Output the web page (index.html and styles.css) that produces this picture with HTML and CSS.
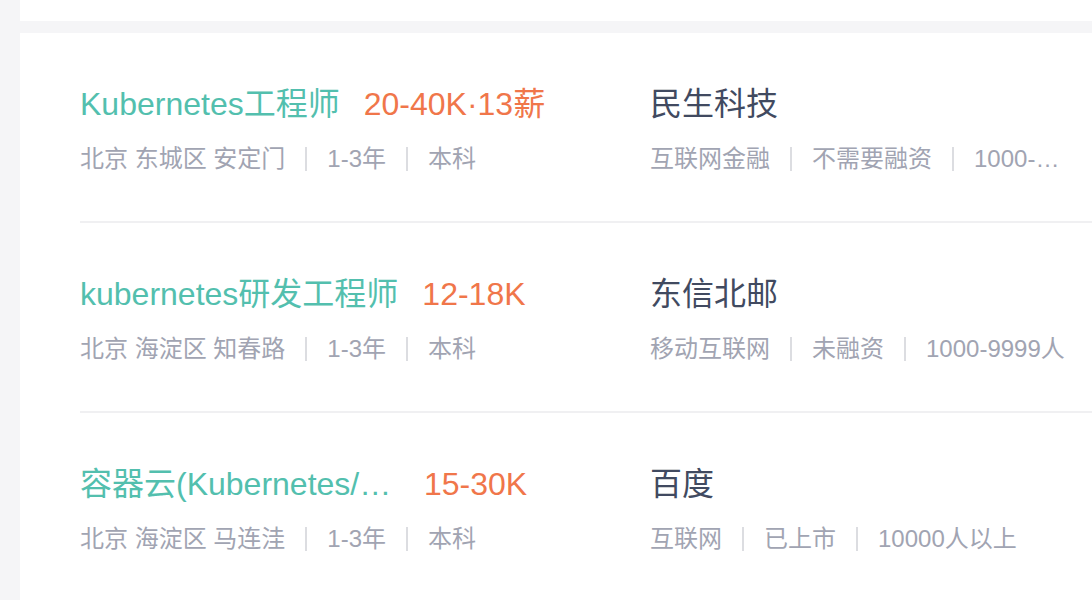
FILE: index.html
```html
<!DOCTYPE html>
<html lang="zh-CN">
<head>
<meta charset="utf-8">
<title>职位列表</title>
<link rel="stylesheet" href="styles.css">
</head>
<body>
<div class="page">
  <div class="prev-card"></div>
  <ul class="job-list">
    <li class="job">
      <div class="job-primary">
        <div class="job-head">
          <span class="job-title">Kubernetes工程师</span>
          <span class="salary">20-40K·13薪</span>
        </div>
        <div class="meta">
          <span class="meta-item">北京 东城区 安定门</span>
          <span class="sep"></span>
          <span class="meta-item">1-3年</span>
          <span class="sep"></span>
          <span class="meta-item">本科</span>
        </div>
      </div>
      <div class="job-company">
        <div class="company-name">民生科技</div>
        <div class="meta">
          <span class="meta-item">互联网金融</span>
          <span class="sep"></span>
          <span class="meta-item">不需要融资</span>
          <span class="sep"></span>
          <span class="meta-item meta-last">1000-9999人</span>
        </div>
      </div>
    </li>
    <li class="job">
      <div class="job-primary">
        <div class="job-head">
          <span class="job-title">kubernetes研发工程师</span>
          <span class="salary">12-18K</span>
        </div>
        <div class="meta">
          <span class="meta-item">北京 海淀区 知春路</span>
          <span class="sep"></span>
          <span class="meta-item">1-3年</span>
          <span class="sep"></span>
          <span class="meta-item">本科</span>
        </div>
      </div>
      <div class="job-company">
        <div class="company-name">东信北邮</div>
        <div class="meta">
          <span class="meta-item">移动互联网</span>
          <span class="sep"></span>
          <span class="meta-item">未融资</span>
          <span class="sep"></span>
          <span class="meta-item meta-last">1000-9999人</span>
        </div>
      </div>
    </li>
    <li class="job">
      <div class="job-primary">
        <div class="job-head">
          <span class="job-title">容器云(Kubernetes/Docker)研发工程师</span>
          <span class="salary">15-30K</span>
        </div>
        <div class="meta">
          <span class="meta-item">北京 海淀区 马连洼</span>
          <span class="sep"></span>
          <span class="meta-item">1-3年</span>
          <span class="sep"></span>
          <span class="meta-item">本科</span>
        </div>
      </div>
      <div class="job-company">
        <div class="company-name">百度</div>
        <div class="meta">
          <span class="meta-item">互联网</span>
          <span class="sep"></span>
          <span class="meta-item">已上市</span>
          <span class="sep"></span>
          <span class="meta-item meta-last">10000人以上</span>
        </div>
      </div>
    </li>
  </ul>
</div>
</body>
</html>
```

FILE: styles.css
```css
* {
  box-sizing: border-box;
}

html, body {
  margin: 0;
  padding: 0;
  background: #f5f5f7;
  overflow: hidden;
}

body {
  font-family: "Liberation Sans", "Noto Sans CJK SC", sans-serif;
}

.page {
  padding-left: 20px;
  height: 600px;
}

.prev-card {
  height: 21px;
  background: #ffffff;
}

.job-list {
  list-style: none;
  margin: 12px 0 0 0;
  padding: 0 0 0 60px;
  background: #ffffff;
}

.job {
  display: flex;
  padding: 49px 0 45px 0;
  border-bottom: 2px solid #f0f0f2;
}

.job-primary {
  width: 570px;
  flex: none;
}

.job-company {
  width: 418px;
  flex: none;
  min-width: 0;
}

.job-head {
  display: flex;
  align-items: baseline;
  height: 44px;
  line-height: 44px;
  font-size: 32px;
  white-space: nowrap;
}

.job-title {
  color: #53bfae;
  max-width: 320px;
  overflow: hidden;
  text-overflow: ellipsis;
}

.salary {
  color: #f0764a;
  margin-left: 24px;
}

.company-name {
  height: 44px;
  line-height: 44px;
  font-size: 32px;
  color: #414a60;
  white-space: nowrap;
}

.meta {
  display: flex;
  align-items: center;
  margin-top: 16px;
  height: 34px;
  line-height: 34px;
  font-size: 24px;
  color: #a1a4b2;
  white-space: nowrap;
  min-width: 0;
}

.meta-item {
  flex: none;
}

.meta-last {
  flex: 0 1 auto;
  min-width: 0;
  overflow: hidden;
  text-overflow: ellipsis;
}

.sep {
  flex: none;
  width: 2px;
  height: 24px;
  margin: 0 20px;
  background: #dcdde1;
}
```
